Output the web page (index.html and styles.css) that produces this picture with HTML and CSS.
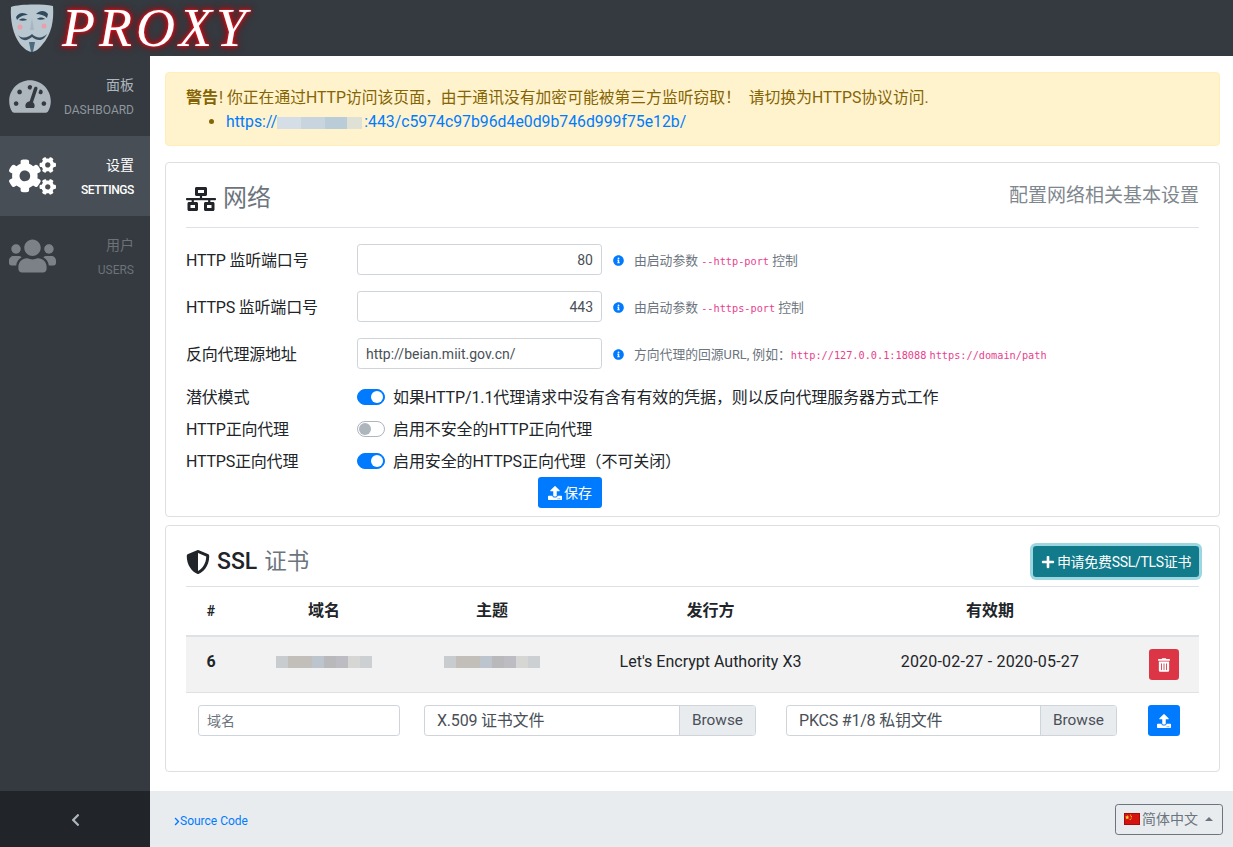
FILE: index.html
```html
<!DOCTYPE html>
<html lang="zh">
<head>
<meta charset="utf-8">
<title>Proxy</title>
<link rel="stylesheet" href="styles.css">
</head>
<body>
<svg class="sprite" xmlns="http://www.w3.org/2000/svg">
<symbol id="i-dash" viewBox="0 0 576 512"><path d="M288 32C128.94 32 0 160.94 0 320c0 52.8 14.25 102.26 39.06 144.8 5.61 9.62 16.3 15.2 27.44 15.2h443c11.14 0 21.83-5.58 27.44-15.2C561.75 422.26 576 372.8 576 320c0-159.06-128.94-288-288-288zm0 64c14.71 0 26.58 10.13 30.32 23.65-1.11 2.26-2.64 4.23-3.45 6.67l-9.22 27.67c-5.13 3.49-10.97 6.01-17.64 6.01-17.67 0-32-14.33-32-32S270.33 96 288 96zM96 384c-17.67 0-32-14.33-32-32s14.33-32 32-32 32 14.33 32 32-14.33 32-32 32zm48-160c-17.67 0-32-14.33-32-32s14.33-32 32-32 32 14.33 32 32-14.33 32-32 32zm246.77-72.41l-61.33 184C343.13 347.33 352 364.54 352 384c0 11.72-3.38 22.55-8.88 32H232.88c-5.5-9.45-8.88-20.28-8.88-32 0-33.94 26.5-61.43 59.9-63.59l61.34-184.01c4.17-12.56 17.73-19.45 30.36-15.17 12.57 4.19 19.35 17.79 15.17 30.36zm14.66 57.2l15.52-46.55c3.47-1.29 7.13-2.23 11.05-2.23 17.67 0 32 14.33 32 32s-14.33 32-32 32c-11.38-.01-20.89-6.28-26.57-15.22zM480 384c-17.67 0-32-14.33-32-32s14.33-32 32-32 32 14.33 32 32-14.33 32-32 32z"/></symbol>
<symbol id="i-cogs" viewBox="0 0 640 512"><path d="M512.1 191l-8.2 14.3c-3 5.3-9.4 7.5-15.1 5.4-11.8-4.4-22.6-10.7-32.1-18.6-4.6-3.8-5.8-10.5-2.8-15.7l8.2-14.3c-6.9-8-12.3-17.3-15.9-27.4h-16.5c-6 0-11.2-4.3-12.2-10.3-2-12-2.1-24.6 0-37.1 1-6 6.2-10.4 12.2-10.4h16.5c3.6-10.1 9-19.4 15.9-27.4l-8.2-14.3c-3-5.2-1.9-11.9 2.8-15.7 9.5-7.9 20.4-14.2 32.1-18.6 5.7-2.1 12.1.1 15.1 5.4l8.2 14.3c10.5-1.9 21.2-1.9 31.7 0L552 6.3c3-5.3 9.4-7.5 15.1-5.4 11.8 4.4 22.6 10.7 32.1 18.6 4.6 3.8 5.8 10.5 2.8 15.7l-8.2 14.3c6.9 8 12.3 17.3 15.9 27.4h16.5c6 0 11.2 4.3 12.2 10.3 2 12 2.1 24.6 0 37.1-1 6-6.2 10.4-12.2 10.4h-16.5c-3.6 10.1-9 19.4-15.9 27.4l8.2 14.3c3 5.2 1.9 11.9-2.8 15.7-9.5 7.9-20.4 14.2-32.1 18.6-5.7 2.1-12.1-.1-15.1-5.4l-8.2-14.3c-10.4 1.9-21.2 1.9-31.7 0zm-10.5-58.8c38.5 29.6 82.4-14.3 52.8-52.8-38.5-29.7-82.4 14.3-52.8 52.8zM386.3 286.1l33.7 16.8c10.1 5.8 14.5 18.1 10.5 29.1-8.9 24.2-26.4 46.4-42.6 65.8-7.4 8.9-20.2 11.1-30.3 5.3l-29.1-16.8c-16 13.7-34.6 24.6-54.9 31.7v33.6c0 11.6-8.3 21.6-19.7 23.6-24.6 4.2-50.4 4.4-75.9 0-11.5-2-20-11.9-20-23.6V418c-20.3-7.2-38.9-18-54.9-31.7L74 403c-10 5.8-22.9 3.6-30.3-5.3-16.2-19.4-33.3-41.6-42.2-65.7-4-10.9.4-23.2 10.5-29.1l33.3-16.8c-3.9-20.9-3.9-42.4 0-63.4L12 205.8c-10.1-5.8-14.6-18.1-10.5-29 8.9-24.2 26-46.4 42.2-65.8 7.4-8.9 20.2-11.1 30.3-5.3l29.1 16.8c16-13.7 34.6-24.6 54.9-31.7V57.1c0-11.5 8.2-21.5 19.6-23.5 24.6-4.2 50.5-4.4 76-.1 11.5 2 20 11.9 20 23.6v33.6c20.3 7.2 38.9 18 54.9 31.7l29.1-16.8c10-5.8 22.9-3.6 30.3 5.3 16.2 19.4 33.2 41.6 42.1 65.8 4 10.9.1 23.2-10 29.1l-33.7 16.8c3.9 21 3.9 42.5 0 63.5zm-117.6 21.1c59.2-77-28.7-164.9-105.7-105.7-59.2 77 28.7 164.9 105.7 105.7zm243.4 182.7l-8.2 14.3c-3 5.3-9.4 7.5-15.1 5.4-11.8-4.4-22.6-10.7-32.1-18.6-4.6-3.8-5.8-10.5-2.8-15.7l8.2-14.3c-6.9-8-12.3-17.3-15.9-27.4h-16.5c-6 0-11.2-4.3-12.2-10.3-2-12-2.1-24.6 0-37.1 1-6 6.2-10.4 12.2-10.4h16.5c3.6-10.1 9-19.4 15.9-27.4l-8.2-14.3c-3-5.2-1.9-11.9 2.8-15.7 9.5-7.9 20.4-14.2 32.1-18.6 5.7-2.1 12.1.1 15.1 5.4l8.2 14.3c10.5-1.9 21.2-1.9 31.7 0l8.2-14.3c3-5.3 9.4-7.5 15.1-5.4 11.8 4.4 22.6 10.7 32.1 18.6 4.6 3.8 5.8 10.5 2.8 15.7l-8.2 14.3c6.9 8 12.3 17.3 15.9 27.4h16.5c6 0 11.2 4.3 12.2 10.3 2 12 2.1 24.6 0 37.1-1 6-6.2 10.4-12.2 10.4h-16.5c-3.6 10.1-9 19.4-15.9 27.4l8.2 14.3c3 5.2 1.9 11.9-2.8 15.7-9.5 7.9-20.4 14.2-32.1 18.6-5.7 2.1-12.1-.1-15.1-5.4l-8.2-14.3c-10.4 1.9-21.2 1.9-31.7 0zM501.6 431c38.5 29.6 82.4-14.3 52.8-52.8-38.5-29.6-82.4 14.3-52.8 52.8z"/></symbol>
<symbol id="i-users" viewBox="0 0 640 512"><path d="M96 224c35.3 0 64-28.7 64-64s-28.7-64-64-64-64 28.7-64 64 28.7 64 64 64zm448 0c35.3 0 64-28.7 64-64s-28.7-64-64-64-64 28.7-64 64 28.7 64 64 64zm32 32h-64c-17.6 0-33.5 7.1-45.1 18.6 40.3 22.1 68.9 62 75.1 109.4h66c17.7 0 32-14.3 32-32v-32c0-35.3-28.7-64-64-64zm-256 0c61.9 0 112-50.1 112-112S381.9 32 320 32 208 82.1 208 144s50.1 112 112 112zm76.8 32h-8.3c-20.8 10-43.9 16-68.5 16s-47.6-6-68.5-16h-8.3C179.6 288 128 339.6 128 403.2V432c0 26.5 21.5 48 48 48h288c26.5 0 48-21.5 48-48v-28.8c0-63.6-51.6-115.2-115.2-115.2zm-223.7-13.4C161.5 263.1 145.6 256 128 256H64c-35.3 0-64 28.7-64 64v32c0 17.7 14.3 32 32 32h65.9c6.3-47.4 34.9-87.3 75.2-109.4z"/></symbol>
<symbol id="i-net" viewBox="0 0 640 512"><path d="M640 264v-16c0-8.84-7.16-16-16-16H344v-40h72c17.67 0 32-14.33 32-32V32c0-17.67-14.33-32-32-32H224c-17.67 0-32 14.33-32 32v128c0 17.67 14.33 32 32 32h72v40H16c-8.84 0-16 7.16-16 16v16c0 8.84 7.16 16 16 16h104v40H64c-17.67 0-32 14.33-32 32v128c0 17.67 14.33 32 32 32h160c17.67 0 32-14.33 32-32V352c0-17.67-14.33-32-32-32h-56v-40h304v40h-56c-17.67 0-32 14.33-32 32v128c0 17.67 14.33 32 32 32h160c17.67 0 32-14.33 32-32V352c0-17.67-14.33-32-32-32h-56v-40h104c8.84 0 16-7.16 16-16zM256 128V64h128v64H256zm-64 320H96v-64h96v64zm352 0h-96v-64h96v64z"/></symbol>
<symbol id="i-shield" viewBox="0 0 512 512"><path d="M466.5 83.7l-192-80a48.15 48.15 0 0 0-36.9 0l-192 80C27.7 91.1 16 108.6 16 128c0 198.5 114.5 335.7 221.5 380.3 11.8 4.9 25.1 4.9 36.9 0C360.1 472.6 496 349.3 496 128c0-19.4-11.7-36.9-29.5-44.3zM256.1 446.3l-.1-381 175.9 73.3c-3.3 151.4-82.1 261.1-175.8 307.7z"/></symbol>
<symbol id="i-upload" viewBox="0 0 512 512"><path d="M296 384h-80c-13.3 0-24-10.7-24-24V192h-87.7c-17.8 0-26.7-21.5-14.1-34.1L242.3 5.7c7.5-7.5 19.8-7.5 27.3 0l152.2 152.2c12.6 12.6 3.7 34.1-14.1 34.1H320v168c0 13.3-10.7 24-24 24zm216-8v112c0 13.3-10.7 24-24 24H24c-13.3 0-24-10.7-24-24V376c0-13.3 10.7-24 24-24h136v8c0 30.9 25.1 56 56 56h80c30.9 0 56-25.1 56-56v-8h136c13.3 0 24 10.7 24 24zm-124 88c0-11-9-20-20-20s-20 9-20 20 9 20 20 20 20-9 20-20zm64 0c0-11-9-20-20-20s-20 9-20 20 9 20 20 20 20-9 20-20z"/></symbol>
<symbol id="i-plus" viewBox="0 0 448 512"><path d="M416 208H272V64c0-17.67-14.33-32-32-32h-32c-17.67 0-32 14.33-32 32v144H32c-17.67 0-32 14.33-32 32v32c0 17.67 14.33 32 32 32h144v144c0 17.67 14.33 32 32 32h32c17.67 0 32-14.33 32-32V304h144c17.67 0 32-14.33 32-32v-32c0-17.67-14.33-32-32-32z"/></symbol>
<symbol id="i-trash" viewBox="0 0 448 512"><path d="M32 464a48 48 0 0 0 48 48h288a48 48 0 0 0 48-48V128H32zm272-256a16 16 0 0 1 32 0v224a16 16 0 0 1-32 0zm-96 0a16 16 0 0 1 32 0v224a16 16 0 0 1-32 0zm-96 0a16 16 0 0 1 32 0v224a16 16 0 0 1-32 0zM432 32H312l-9.4-18.7A24 24 0 0 0 281.1 0H166.8a23.72 23.72 0 0 0-21.4 13.3L136 32H16A16 16 0 0 0 0 48v32a16 16 0 0 0 16 16h416a16 16 0 0 0 16-16V48a16 16 0 0 0-16-16z"/></symbol>
<symbol id="i-info" viewBox="0 0 512 512"><path d="M256 8C119.043 8 8 119.083 8 256c0 136.997 111.043 248 248 248s248-111.003 248-248C504 119.083 392.957 8 256 8zm0 110c23.196 0 42 18.804 42 42s-18.804 42-42 42-42-18.804-42-42 18.804-42 42-42zm56 254c0 6.627-5.373 12-12 12h-88c-6.627 0-12-5.373-12-12v-24c0-6.627 5.373-12 12-12h12v-64h-12c-6.627 0-12-5.373-12-12v-24c0-6.627 5.373-12 12-12h64c6.627 0 12 5.373 12 12v100h12c6.627 0 12 5.373 12 12v24z"/></symbol>
<symbol id="i-left" viewBox="0 0 320 512"><path d="M34.52 239.03L228.87 44.69c9.37-9.37 24.57-9.37 33.94 0l22.67 22.67c9.36 9.36 9.37 24.52.04 33.9L131.49 256l154.02 154.75c9.34 9.38 9.32 24.54-.04 33.9l-22.67 22.67c-9.37 9.37-24.57 9.37-33.94 0L34.52 272.97c-9.37-9.37-9.37-24.57 0-33.94z"/></symbol>
<symbol id="i-right" viewBox="0 0 320 512"><path d="M285.476 272.971L91.132 467.314c-9.373 9.373-24.569 9.373-33.941 0l-22.667-22.667c-9.357-9.357-9.373-24.522-.04-33.901L188.505 256 34.484 101.255c-9.333-9.379-9.317-24.544.04-33.901l22.667-22.667c9.373-9.373 24.569-9.373 33.941 0L285.475 239.03c9.373 9.372 9.373 24.568.001 33.941z"/></symbol>
</svg>

<header class="topbar">
  <svg class="mask" viewBox="0 0 44 48" xmlns="http://www.w3.org/2000/svg">
    <path d="M1 3 C10 0 32 0 43 2 C44 16 42 30 32 41 C28 46 24 48 22 48 C19 48 14 45 10 40 C3 31 0 16 1 3Z" fill="#b9c7d1"/>
    <path d="M6 13 C9 8 14 8 18 11 C14 11 10 12 7 16Z M38 10 C35 6 30 6 26 10 C30 10 34 11 37 14Z" fill="#2f4a5c"/>
    <path d="M9 16 C11 14 15 14 17 16 C14 17 11 17 9 16Z M27 15 C29 13 33 13 35 15 C32 16 29 16 27 15Z" fill="#2f4a5c"/>
    <circle cx="10" cy="23" r="2.5" fill="#e8a0ac"/><circle cx="34" cy="22" r="2.5" fill="#e8a0ac"/>
    <path d="M8 31 C12 35 18 34 22 30 C26 34 32 35 37 30 C33 38 27 37 22 33 C17 37 12 38 8 31Z" fill="#3a4f5e"/>
    <path d="M19 38 L25 38 L23 48 L21 48Z" fill="#4c6a7d"/>
    <path d="M22 14 L20 26 L24 26Z" fill="#a6b6c1"/>
  </svg>
  <span class="wordmark">PROXY</span>
</header>

<div class="frame">
  <aside class="sidebar">
    <nav class="nav">
      <a class="nav-item nav-dash"><svg class="nav-icon"><use href="#i-dash"/></svg><span class="nav-text"><span class="nav-cn">面板</span><span class="nav-en">DASHBOARD</span></span></a>
      <a class="nav-item nav-active"><svg class="nav-icon nav-icon-wide"><use href="#i-cogs"/></svg><span class="nav-text"><span class="nav-cn">设置</span><span class="nav-en">SETTINGS</span></span></a>
      <a class="nav-item nav-muted"><svg class="nav-icon nav-icon-wide"><use href="#i-users"/></svg><span class="nav-text"><span class="nav-cn">用户</span><span class="nav-en">USERS</span></span></a>
    </nav>
    <div class="collapse"><svg class="collapse-icon"><use href="#i-left"/></svg></div>
  </aside>

  <div class="main">
    <main class="content">
      <div class="alert">
        <div><strong>警告</strong>! 你正在通过HTTP访问该页面，由于通讯没有加密可能被第三方监听窃取！ &nbsp;请切换为HTTPS协议访问.</div>
        <ul class="alert-list"><li><a class="link">https://<span class="redact redact-link"></span>:443/c5974c97b96d4e0d9b746d999f75e12b/</a></li></ul>
      </div>

      <section class="card card-net">
        <div class="card-head">
          <h2 class="title"><svg class="title-icon"><use href="#i-net"/></svg><span class="title-sub">网络</span></h2>
          <span class="card-note">配置网络相关基本设置</span>
        </div>
        <div class="field">
          <label class="field-label">HTTP 监听端口号</label>
          <input class="input input-right" value="80">
          <span class="help"><svg class="info"><use href="#i-info"/></svg><span>由启动参数 <code>--http-port</code> 控制</span></span>
        </div>
        <div class="field">
          <label class="field-label">HTTPS 监听端口号</label>
          <input class="input input-right" value="443">
          <span class="help"><svg class="info"><use href="#i-info"/></svg><span>由启动参数 <code>--https-port</code> 控制</span></span>
        </div>
        <div class="field field-last">
          <label class="field-label">反向代理源地址</label>
          <input class="input" value="http://beian.miit.gov.cn/">
          <span class="help"><svg class="info"><use href="#i-info"/></svg><span>方向代理的回源URL, 例如：<code>http://127.0.0.1:18088</code> <code>https://domain/path</code></span></span>
        </div>
        <div class="toggle-row">
          <span class="field-label">潜伏模式</span>
          <span class="switch switch-on"></span><span class="toggle-text">如果HTTP/1.1代理请求中没有含有有效的凭据，则以反向代理服务器方式工作</span>
        </div>
        <div class="toggle-row">
          <span class="field-label">HTTP正向代理</span>
          <span class="switch"></span><span class="toggle-text">启用不安全的HTTP正向代理</span>
        </div>
        <div class="toggle-row">
          <span class="field-label">HTTPS正向代理</span>
          <span class="switch switch-on"></span><span class="toggle-text">启用安全的HTTPS正向代理（不可关闭）</span>
        </div>
        <div class="save-row"><button class="btn btn-blue btn-save"><svg class="btn-icon"><use href="#i-upload"/></svg>保存</button></div>
      </section>

      <section class="card card-ssl">
        <div class="card-head card-head-ssl">
          <h2 class="title"><svg class="title-icon-shield"><use href="#i-shield"/></svg><span class="title-strong">SSL</span><span class="title-sub title-sub-small">证书</span></h2>
          <button class="btn btn-teal"><svg class="btn-icon"><use href="#i-plus"/></svg>申请免费SSL/TLS证书</button>
        </div>
        <table class="table">
          <colgroup><col class="c1"><col class="c2"><col class="c3"><col class="c4"><col class="c5"><col class="c6"></colgroup>
          <thead><tr><th class="th-hash">#</th><th>域名</th><th>主题</th><th>发行方</th><th>有效期</th><th></th></tr></thead>
          <tbody><tr>
            <td class="td-id">6</td>
            <td><span class="redact redact-cell"></span></td>
            <td><span class="redact redact-cell"></span></td>
            <td>Let's Encrypt Authority X3</td>
            <td class="td-date">2020-02-27 - 2020-05-27</td>
            <td class="td-action"><button class="btn btn-red"><svg class="trash"><use href="#i-trash"/></svg></button></td>
          </tr></tbody>
        </table>
        <div class="upload-row">
          <input class="input input-domain" placeholder="域名">
          <div class="file file-a"><span class="file-name">X.509 证书文件</span><span class="file-btn">Browse</span></div>
          <div class="file file-b"><span class="file-name">PKCS #1/8 私钥文件</span><span class="file-btn">Browse</span></div>
          <button class="btn btn-blue btn-square"><svg class="btn-icon-solo"><use href="#i-upload"/></svg></button>
        </div>
      </section>
    </main>

    <footer class="footer">
      <a class="source"><svg class="source-icon"><use href="#i-right"/></svg>Source Code</a>
      <button class="lang">
        <svg class="flag" viewBox="0 0 16 12" xmlns="http://www.w3.org/2000/svg"><rect width="16" height="12" fill="#d5140f"/><rect x="0.5" y="0.5" width="15" height="11" fill="none" stroke="#a80c0a"/><path d="M3.2 2l.6 1.6 1.6.1-1.3 1 .5 1.6-1.4-.9-1.4.9.5-1.6-1.3-1 1.6-.1Z" fill="#ffd83a"/><circle cx="6.5" cy="2" r=".6" fill="#ffd83a"/><circle cx="7.3" cy="3.4" r=".6" fill="#ffd83a"/><circle cx="7.2" cy="5" r=".6" fill="#ffd83a"/><circle cx="6.2" cy="6.3" r=".6" fill="#ffd83a"/></svg>
        <span>简体中文</span><span class="caret"></span>
      </button>
    </footer>
  </div>
</div>
</body>
</html>
```

FILE: styles.css
```css
* { box-sizing: border-box; }
html, body { height: 100%; }
body {
  margin: 0;
  height: 100vh;
  overflow: hidden;
  display: flex;
  flex-direction: column;
  font-family: Roboto, "Noto Sans CJK SC", sans-serif;
  font-size: 16px;
  line-height: 24px;
  color: #212529;
  background: #fff;
}
.sprite { display: none; }

.topbar {
  flex: 0 0 56px;
  display: flex;
  align-items: center;
  background: #343a40;
  padding-left: 10px;
}
.mask { width: 44px; height: 48px; flex: none; }
.wordmark {
  margin-left: 8px;
  font-family: "Liberation Serif", serif;
  font-style: italic;
  font-size: 54px;
  line-height: 56px;
  letter-spacing: 4px;
  color: #fff;
  text-shadow: 0 0 2px #ff2030, 0 0 4px #d01018, 0 0 7px #a80c12, 0 0 9px #8c0c12;
}

.frame { flex: 1; display: flex; min-height: 0; }

.sidebar {
  flex: 0 0 150px;
  display: flex;
  flex-direction: column;
  background: #343a40;
}
.nav { flex: 1; }
.nav-item {
  height: 80px;
  display: flex;
  align-items: center;
  justify-content: space-between;
  padding: 0 16px 0 9px;
}
.nav-icon { width: 42px; height: 37px; fill: #adb5bd; }
.nav-icon-wide { width: 47px; height: 38px; }
.nav-text { display: flex; flex-direction: column; align-items: flex-end; padding-top: 2px; }
.nav-cn { font-size: 14px; line-height: 24px; color: #adb5bd; }
.nav-en { font-size: 12px; line-height: 24px; margin-top: 1px; color: #8f969d; }
.nav-active { background: #484e55; }
.nav-active .nav-icon { fill: #fff; }
.nav-active .nav-cn { color: #fff; }
.nav-active .nav-en { color: #fff; font-weight: 500; letter-spacing: -.4px; }
.nav-muted .nav-icon { fill: #7b8187; }
.nav-muted .nav-cn, .nav-muted .nav-en { color: #6c7278; }

.collapse {
  flex: 0 0 56px;
  display: flex;
  align-items: center;
  justify-content: center;
  padding-top: 2px;
  background: #212529;
}
.collapse-icon { width: 9px; height: 14px; fill: #adb5bd; }

.main { flex: 1; display: flex; flex-direction: column; min-width: 0; }
.content { flex: 1; padding: 16px 13px 0 15px; min-height: 0; }

.alert {
  height: 74px;
  padding: 13px 20px 11px;
  margin-bottom: 16px;
  background: #fff3cd;
  border: 1px solid #ffeeba;
  border-radius: 4px;
  color: #856404;
  font-size: 15.8px;
}
.alert strong { font-weight: 700; font-size: 16px; margin-right: 1px; }
.alert-list { margin: 0; padding-left: 40px; }
.link { color: #007bff; }

.redact { display: inline-block; vertical-align: middle; }
.redact-link {
  width: 85px;
  height: 12px;
  margin-right: 2px;
  background: linear-gradient(90deg, #d5dde6 0 24px, #c8d4de 24px 48px, #b9ccd8 48px 70px, #dfe0d6 70px 85px);
}
.redact-cell {
  width: 96px;
  height: 12px;
  background: linear-gradient(90deg, #c9cccf 0 12px, #c2bfba 12px 36px, #bcc5cd 36px 48px, #b9b9bb 48px 60px, #bcbcc2 60px 72px, #d6d6d4 72px 84px, #ccd0d3 84px 96px);
}

.card {
  border: 1px solid #dfdfdf;
  border-radius: 4px;
  background: #fff;
  padding: 20px 20px 0;
}
.card-net { height: 355px; margin-bottom: 8px; }
.card-ssl { height: 247px; }
.card-head {
  height: 45px;
  display: flex;
  justify-content: space-between;
  align-items: flex-start;
  border-bottom: 1px solid #dee2e6;
  margin-bottom: 16px;
}
.card-head-ssl { height: 41px; margin-bottom: 0; }
.title {
  display: flex;
  align-items: center;
  margin: 1px 0 0;
  height: 29px;
  font-size: 24px;
  line-height: 29px;
  font-weight: 400;
}
.title-icon { width: 30px; height: 24px; margin-right: 7px; fill: #212529; }
.title-icon-shield { width: 24px; height: 24px; margin-right: 7px; fill: #212529; }
.title-strong { font-weight: 500; font-size: 23px; margin-right: 7px; }
.title-sub { color: #6c757d; }
.title-sub-small { font-size: 22.5px; }
.card-note { font-size: 19px; line-height: 25px; color: #7f878e; }

.field {
  display: flex;
  align-items: center;
  height: 31px;
  margin-bottom: 16px;
}
.field-last { margin-bottom: 12px; }
.field-label { flex: 0 0 171px; font-size: 16px; letter-spacing: -.2px; padding-top: 2px; }
.input {
  height: 31px;
  width: 245px;
  flex: none;
  padding: 4px 8px;
  border: 1px solid #ced4da;
  border-radius: 3.2px;
  font: 14px/1.5 Roboto, "Noto Sans CJK SC", sans-serif;
  color: #495057;
  background: #fff;
}
.input::placeholder { color: #6c757d; }
.input-right { text-align: right; }
.help {
  margin-left: 11px;
  padding-top: 2px;
  display: flex;
  align-items: center;
  font-size: 12.8px;
  line-height: 19px;
  color: #6c757d;
}
.info { width: 11px; height: 11px; margin-right: 10px; fill: #007bff; flex: none; }
code {
  font-family: "DejaVu Sans Mono", monospace;
  font-size: 10.24px;
  color: #e83e8c;
}

.toggle-row {
  display: flex;
  align-items: center;
  height: 32px;
}
.switch {
  position: relative;
  flex: none;
  width: 28px;
  height: 16px;
  margin-right: 8px;
  border: 1px solid #adb5bd;
  border-radius: 8px;
  background: #fff;
}
.switch::after {
  content: "";
  position: absolute;
  left: 1px;
  top: 1px;
  width: 12px;
  height: 12px;
  border-radius: 50%;
  background: #adb5bd;
}
.switch-on { background: #007bff; border-color: #007bff; }
.switch-on::after { left: 13px; background: #fff; }
.toggle-text { font-size: 16px; letter-spacing: -.1px; padding-top: 2px; }

.save-row { padding-left: 352px; }
.btn {
  display: inline-flex;
  align-items: center;
  justify-content: center;
  height: 31px;
  padding: 0 8px;
  border: 1px solid transparent;
  border-radius: 3.2px;
  font: 14px/1 Roboto, "Noto Sans CJK SC", sans-serif;
  color: #fff;
  cursor: pointer;
}
.btn-blue { background: #007bff; }
.btn-save { width: 64px; padding: 0; }
.btn-teal {
  width: 166px;
  background: #117a8b;
  box-shadow: 0 0 0 3px rgba(58, 176, 195, .5);
  white-space: nowrap;
  padding: 0;
  letter-spacing: -.3px;
}
.btn-red { width: 30px; height: 31px; padding: 0; background: #dc3545; vertical-align: top; }
.btn-square { width: 32px; padding: 0; flex: none; margin-left: 31px; }
.btn-icon { width: 14px; height: 14px; margin-right: 2px; fill: #fff; }
.btn-icon-solo { width: 14px; height: 14px; fill: #fff; }
.trash { width: 12px; height: 14px; fill: #fff; }

.table {
  width: 100%;
  border-collapse: separate;
  border-spacing: 0;
  table-layout: fixed;
  text-align: center;
}
.c1 { width: 50px; }
.c2 { width: 176px; }
.c3 { width: 160px; }
.c4 { width: 277px; }
.c5 { width: 282px; }
.c6 { width: 68px; }
.table th {
  font-weight: 700;
  border-bottom: 2px solid #dee2e6;
  padding: 12px 0;
  vertical-align: top;
}
.table .th-hash { font-size: 14px; }
.table td {
  background: #f2f2f2;
  border-bottom: 1px solid #dee2e6;
  padding: 12px 0;
  line-height: 26px;
  vertical-align: top;
}
.table .td-id { font-weight: 700; }
.table .td-date { letter-spacing: .2px; }
.table .td-action { padding-right: 2px; }
.table td .redact { margin-top: -1px; }

.upload-row {
  display: flex;
  align-items: center;
  padding: 12px 0 0 12px;
}
.input-domain { width: 202px; }
.file {
  display: flex;
  height: 31px;
  border: 1px solid #ced4da;
  border-radius: 3.2px;
  overflow: hidden;
  color: #495057;
  font-size: 16px;
  line-height: 29px;
}
.file-a { width: 332px; margin-left: 24px; }
.file-b { width: 331px; margin-left: 30px; }
.file-name { flex: 1; padding-left: 12px; letter-spacing: -.2px; }
.file-btn {
  padding: 0 12px;
  background: #e9ecef;
  border-left: 1px solid #ced4da;
  font-size: 15.4px;
}

.footer {
  flex: 0 0 56px;
  display: flex;
  align-items: center;
  justify-content: space-between;
  padding: 0 10px 0 24px;
  background: #e9ecef;
}
.source {
  display: flex;
  align-items: center;
  margin-top: 4px;
  font-size: 12px;
  color: #007bff;
}
.source-icon { width: 6px; height: 9px; fill: #007bff; }
.lang {
  display: inline-flex;
  align-items: center;
  width: 108px;
  height: 31px;
  padding: 0 8px;
  background: transparent;
  border: 1px solid #6c757d;
  border-radius: 3.2px;
  font: 14px/1 Roboto, "Noto Sans CJK SC", sans-serif;
  color: #6c757d;
}
.flag { width: 16px; height: 12px; margin-right: 2px; flex: none; }
.caret {
  margin-left: 7px;
  border-left: 4.2px solid transparent;
  border-right: 4.2px solid transparent;
  border-bottom: 4.2px solid #6c757d;
}
```
